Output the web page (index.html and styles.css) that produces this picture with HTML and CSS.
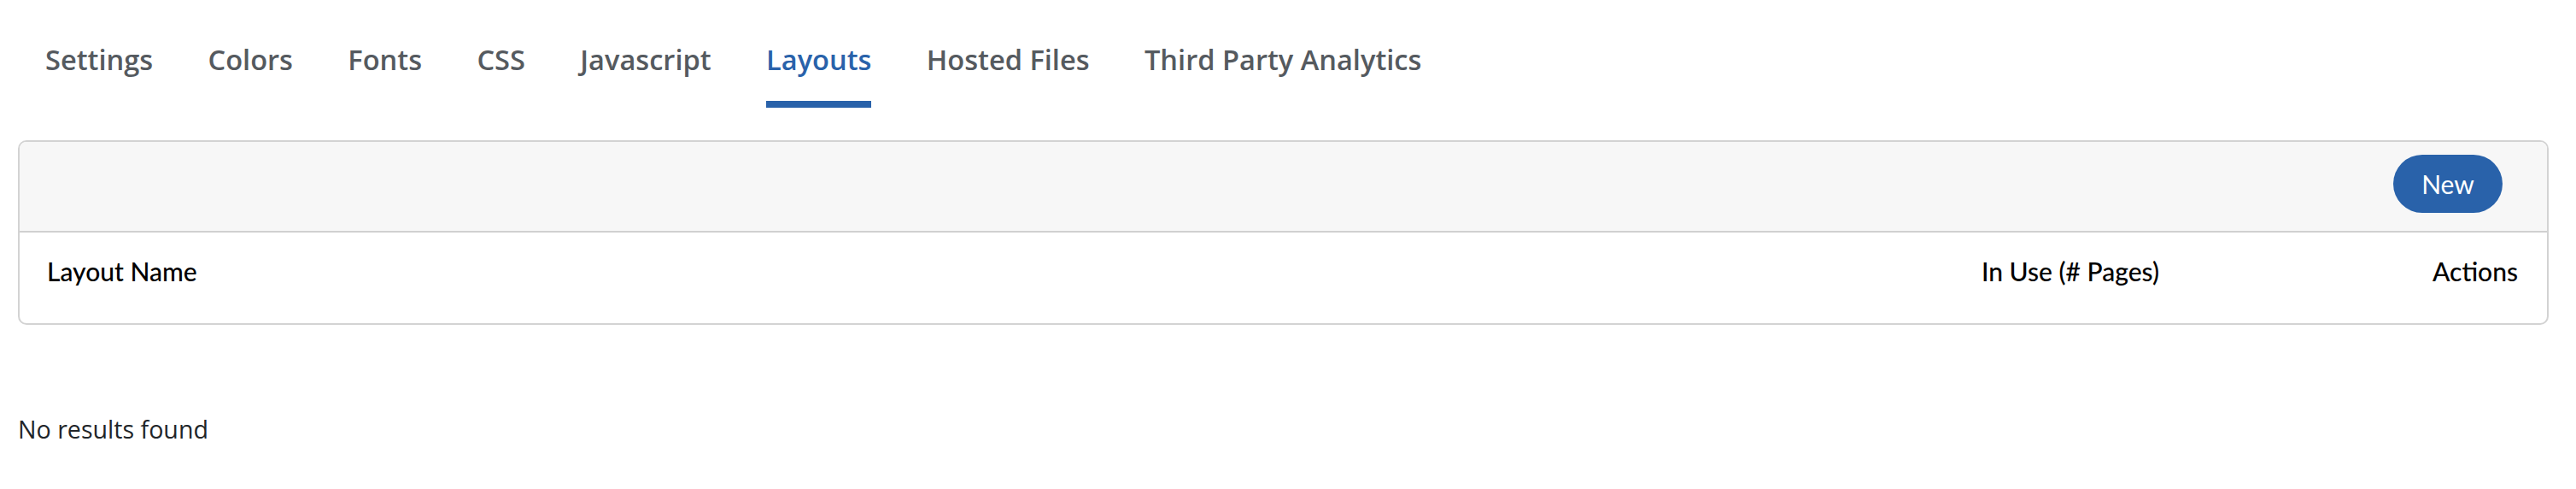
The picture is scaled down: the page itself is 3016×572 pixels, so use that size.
FILE: index.html
```html
<!DOCTYPE html>
<html lang="en">
<head>
<meta charset="utf-8">
<title>Layouts</title>
<link rel="stylesheet" href="styles.css">
</head>
<body>
<div class="page">
  <nav class="tabs">
    <a class="tab">Settings</a>
    <a class="tab">Colors</a>
    <a class="tab">Fonts</a>
    <a class="tab">CSS</a>
    <a class="tab">Javascript</a>
    <a class="tab active">Layouts</a>
    <a class="tab">Hosted Files</a>
    <a class="tab">Third Party Analytics</a>
  </nav>
  <div class="card">
    <div class="card-header">
      <button class="btn-new">New</button>
    </div>
    <div class="table-head">
      <div class="col-name">Layout Name</div>
      <div class="col-use">In Use (# Pages)</div>
      <div class="col-actions">Actions</div>
    </div>
  </div>
  <p class="empty">No results found</p>
</div>
</body>
</html>
```

FILE: styles.css
```css
html {
  zoom: 2;
}
body {
  margin: 0;
  background: #ffffff;
  font-family: "Open Sans", "Liberation Sans", sans-serif;
}
.page {
  padding: 11px 16px 0 10.5px;
}
.tabs {
  display: flex;
  align-items: flex-end;
  gap: 32.2px;
  padding-left: 16px;
}
.tab {
  font-family: "Open Sans", "Liberation Sans", sans-serif;
  font-weight: 600;
  font-size: 16.3px;
  line-height: 24px;
  color: #555a5f;
  padding: 12px 0 12px;
  border-bottom: 4px solid transparent;
  cursor: pointer;
}
.tab.active {
  color: #2962aa;
  border-bottom-color: #2962aa;
}
.card {
  margin-top: 19px;
  border: 1px solid #d3d3d3;
  border-radius: 5px;
  overflow: hidden;
}
.card-header {
  background: #f7f7f7;
  border-bottom: 1px solid #d0d0d0;
  height: 52px;
  padding: 0 26px 0 16px;
  display: flex;
  align-items: center;
  justify-content: flex-end;
}
.btn-new {
  background: #2962aa;
  color: #ffffff;
  border: none;
  border-radius: 17px;
  height: 34px;
  width: 64px;
  font-family: "Lato", "Liberation Sans", sans-serif;
  font-size: 15px;
  font-weight: 400;
  padding: 0;
  margin-top: -3px;
}
.table-head {
  display: grid;
  grid-template-columns: 1fr auto 210px;
  align-items: center;
  height: 53px;
  padding: 0 17px 8px 16px;
  box-sizing: border-box;
  font-family: "Lato", "Liberation Sans", sans-serif;
  font-size: 15px;
  font-weight: 500;
  color: #000000;
}
.col-actions {
  text-align: right;
}
.empty {
  margin: 51px 0 0;
  font-size: 14.3px;
  line-height: 20px;
  color: #212529;
}
```
